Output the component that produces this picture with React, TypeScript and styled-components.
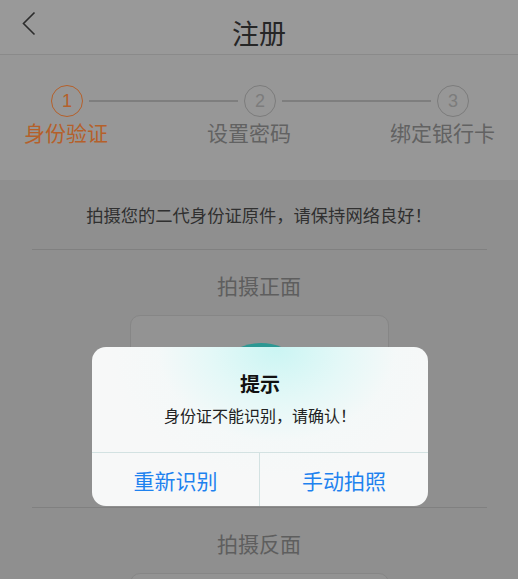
import styled, { createGlobalStyle } from 'styled-components';

const GlobalStyle = createGlobalStyle`
	html, body {
		margin: 0;
		padding: 0;
		background: #8f8f8f;
		font-family: 'Noto Sans CJK SC', 'Noto Sans', sans-serif;
	}
`;

const steps = [
	{ num: 1, label: '身份验证' },
	{ num: 2, label: '设置密码' },
	{ num: 3, label: '绑定银行卡' },
];

function App() {
	return (
		<>
			<GlobalStyle />
			<Page>
				<Header>
					<BackButton aria-label="back">
						<svg width="14" height="25" viewBox="0 0 14 25">
							<polyline points="12.5,1.5 1.5,12.5 12.5,23.5" fill="none" stroke="#2c2c2c" strokeWidth="1.6" />
						</svg>
					</BackButton>
					<Title>注册</Title>
					<span />
				</Header>

				<StepsPanel>
					<StepTrack>
						{steps.map((s, i) => (
							<StepGroup key={s.num}>
								{i > 0 && <StepLine />}
								<StepCircle $active={i === 0}>{s.num}</StepCircle>
							</StepGroup>
						))}
					</StepTrack>
					<StepLabels>
						{steps.map((s, i) => (
							<StepLabel key={s.num} $active={i === 0}>
								{s.label}
							</StepLabel>
						))}
					</StepLabels>
				</StepsPanel>

				<Body>
					<Instruction>拍摄您的二代身份证原件，请保持网络良好！</Instruction>
					<Divider />
					<ShotLabel>拍摄正面</ShotLabel>
					<ShotCard>
						<Lens />
					</ShotCard>
					<Divider />
					<ShotLabel>拍摄反面</ShotLabel>
					<ShotCard />
				</Body>

				<Dialog>
					<DialogContent>
						<DialogTitle>提示</DialogTitle>
						<DialogMessage>身份证不能识别，请确认！</DialogMessage>
					</DialogContent>
					<DialogActions>
						<DialogButton>重新识别</DialogButton>
						<DialogButton>手动拍照</DialogButton>
					</DialogActions>
				</Dialog>
			</Page>
		</>
	);
}

const Page = styled.div`
	position: relative;
	width: 518px;
	height: 579px;
	overflow: hidden;
	background: #8f8f8f;
`;

const Header = styled.header`
	display: grid;
	grid-template-columns: 70px 1fr 70px;
	height: 54px;
	background: #999999;
	border-bottom: 1px solid #8a8a8a;
`;

const BackButton = styled.div`
	padding: 11px 0 0 22px;
`;

const Title = styled.h1`
	margin: 0;
	padding-top: 13px;
	text-align: center;
	font-size: 27px;
	font-weight: 400;
	line-height: 40px;
	color: #262626;
`;

const StepsPanel = styled.section`
	background: #979797;
	padding: 30px 0 35px;
`;

const StepTrack = styled.div`
	display: flex;
	align-items: center;
	padding: 0 49px 0 51px;
`;

const StepGroup = styled.div`
	display: flex;
	align-items: center;
	&:not(:first-child) {
		flex: 1;
	}
`;

const StepCircle = styled.div<{ $active?: boolean }>`
	box-sizing: border-box;
	flex: none;
	width: 32px;
	height: 32px;
	border-radius: 50%;
	border: 1.5px solid ${(p) => (p.$active ? '#b5602a' : '#7c7c7c')};
	color: ${(p) => (p.$active ? '#b5602a' : '#7c7c7c')};
	display: flex;
	align-items: center;
	justify-content: center;
	font-family: 'Liberation Sans', sans-serif;
	font-size: 18px;
	font-weight: 300;
`;

const StepLine = styled.div`
	flex: 1;
	height: 1.5px;
	margin: 0 6px;
	background: #7e7e7e;
`;

const StepLabels = styled.div`
	display: flex;
	justify-content: space-between;
	padding: 0 23px 0 24px;
	margin-top: 3px;
`;

const StepLabel = styled.span<{ $active?: boolean }>`
	font-size: 21px;
	line-height: 25px;
	color: ${(p) => (p.$active ? '#b5602a' : '#626262')};
`;

const Body = styled.main`
	display: flex;
	flex-direction: column;
	align-items: center;
`;

const Instruction = styled.p`
	margin: 0;
	height: 69px;
	display: flex;
	align-items: center;
	font-size: 17.3px;
	color: #303030;
`;

const Divider = styled.hr`
	align-self: stretch;
	margin: 0 31px 0 32px;
	border: none;
	border-top: 1px solid #808080;
`;

const ShotLabel = styled.h2`
	margin: 0;
	padding: 23px 0 17px;
	font-size: 21px;
	font-weight: 400;
	line-height: 25px;
	color: #5e5e5e;
`;

const ShotCard = styled.div`
	position: relative;
	box-sizing: border-box;
	width: 259px;
	height: 176px;
	margin-bottom: 16px;
	border: 1px solid #868686;
	border-radius: 10px;
	background: #939393;
	overflow: hidden;
`;

const Lens = styled.div`
	position: absolute;
	left: 77px;
	top: 27px;
	width: 106px;
	height: 106px;
	border-radius: 50%;
	background: #2c9893;
`;

const Dialog = styled.div`
	position: absolute;
	top: 347px;
	left: 92px;
	width: 336px;
	border-radius: 14px;
	overflow: hidden;
	background:
		radial-gradient(ellipse 170px 135px at 55% 0%, rgba(200, 245, 243, 0.95), rgba(222, 248, 247, 0.75) 40%, rgba(240, 249, 249, 0.35) 70%, rgba(247, 248, 248, 0) 100%),
		#f7f8f8;
`;

const DialogContent = styled.div`
	display: flex;
	flex-direction: column;
	align-items: center;
	padding: 24px 0 26px;
	border-bottom: 1px solid #d3e2e2;
`;

const DialogTitle = styled.h3`
	margin: 0 0 7px;
	font-size: 20px;
	font-weight: 700;
	line-height: 26px;
	color: #111;
`;

const DialogMessage = styled.p`
	margin: 0;
	font-size: 16px;
	line-height: 22px;
	color: #222;
`;

const DialogActions = styled.div`
	display: grid;
	grid-template-columns: 1fr 1fr;
	height: 53px;
`;

const DialogButton = styled.button`
	border: none;
	background: transparent;
	font-family: inherit;
	font-size: 21px;
	color: #1e82ef;
	padding: 0;
	&:first-child {
		border-right: 1px solid #d3e2e2;
	}
`;

export default App;
